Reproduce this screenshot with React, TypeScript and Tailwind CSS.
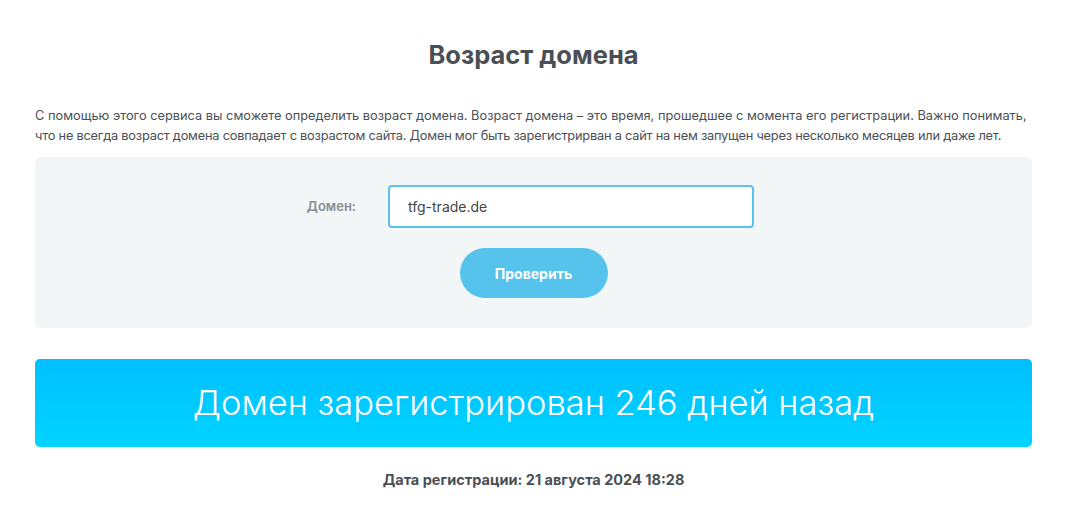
export default function App() {
  return (
    <div className="min-h-screen bg-white font-['Inter','Noto_Sans',sans-serif] text-[#4a4f55]">
      <div className="mx-[35px] pt-[40px]">
        <h1 className="text-center text-[25.5px] font-bold leading-[30px] text-[#4a4f55]">
          Возраст домена
        </h1>

        <p className="mt-[36px] whitespace-nowrap text-[12.8px] leading-[20px] text-[#4a4f55]">
          <span className="block">
            С помощью этого сервиса вы сможете определить возраст домена. Возраст домена – это время, прошедшее с момента его регистрации. Важно понимать,
          </span>
          <span className="block tracking-[-0.22px]">
            что не всегда возраст домена совпадает с возрастом сайта. Домен мог быть зарегистрирван а сайт на нем запущен через несколько месяцев или даже лет.
          </span>
        </p>

        {/* Form */}
        <div className="mt-[11px] flex h-[171px] flex-col items-center rounded-[5px] bg-[#f3f6f7] pt-[28px]">
          <div className="mr-[17px] flex items-center">
            <label className="mr-[32px] w-[60px] text-right text-[13px] font-semibold text-[#8a8d90]">
              Домен:
            </label>
            <input
              type="text"
              defaultValue="tfg-trade.de"
              className="h-[43px] w-[366px] rounded-[4px] border-2 border-[#5bc0eb] bg-white px-[18px] text-[14px] text-[#444] outline-none"
            />
          </div>
          <button className="mt-[20px] h-[50px] w-[148px] rounded-full bg-[#55c3ec] text-[14px] font-bold text-white">
            Проверить
          </button>
        </div>

        {/* Result */}
        <div className="mt-[31px] flex h-[88px] items-center justify-center rounded-[5px] bg-gradient-to-b from-[#00bfff] to-[#00d4ff]">
          <span className="text-[34.5px] font-light text-white">
            Домен зарегистрирован 246 дней назад
          </span>
        </div>

        <p className="mt-[22px] text-center text-[14.5px] font-bold text-[#4a4f55]">
          Дата регистрации: 21 августа 2024 18:28
        </p>
      </div>
    </div>
  );
}
